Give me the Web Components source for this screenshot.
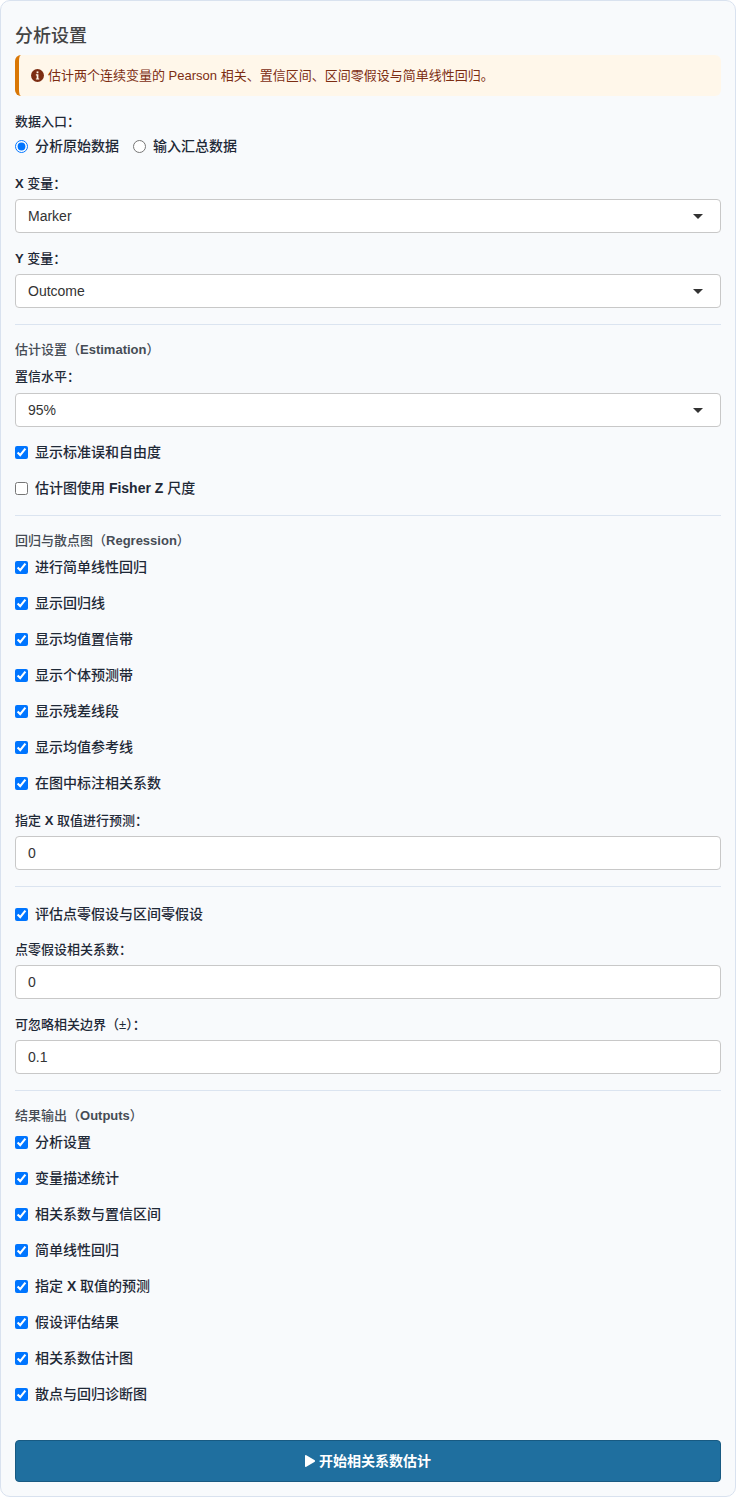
<!DOCTYPE html>
<html lang="zh">
<head>
<meta charset="utf-8">
<title>分析设置</title>
<style>
  html, body { margin: 0; background: #fff; }
  body { font-family: "Liberation Sans", "Noto Sans CJK SC", sans-serif; font-size: 14px; color: #1f2937; }
  b { font-weight: 700; }
</style>
</head>
<body>
<settings-card heading="分析设置">
  <info-note>估计两个连续变量的 Pearson 相关、置信区间、区间零假设与简单线性回归。</info-note>

  <radio-field label="数据入口：" name="entry" options="分析原始数据|输入汇总数据"></radio-field>
  <select-field label="<b>X</b> 变量：" value="Marker"></select-field>
  <select-field label="<b>Y</b> 变量：" value="Outcome"></select-field>

  <section-rule></section-rule>
  <section-head>估计设置（<b>Estimation</b>）</section-head>
  <select-field style="--label-gap:6px" label="置信水平：" value="95%"></select-field>
  <check-row checked>显示标准误和自由度</check-row>
  <check-row>估计图使用 <b>Fisher Z</b> 尺度</check-row>

  <section-rule style="margin-top:17px"></section-rule>
  <section-head>回归与散点图（<b>Regression</b>）</section-head>
  <check-row checked>进行简单线性回归</check-row>
  <check-row checked>显示回归线</check-row>
  <check-row checked>显示均值置信带</check-row>
  <check-row checked>显示个体预测带</check-row>
  <check-row checked>显示残差线段</check-row>
  <check-row checked>显示均值参考线</check-row>
  <check-row checked style="margin-bottom:17px">在图中标注相关系数</check-row>
  <text-field label="指定 <b>X</b> 取值进行预测：" value="0"></text-field>

  <section-rule></section-rule>
  <check-row checked style="margin-top:17px;margin-bottom:15px">评估点零假设与区间零假设</check-row>
  <text-field label="点零假设相关系数：" value="0"></text-field>
  <text-field label="可忽略相关边界（±）：" value="0.1"></text-field>

  <section-rule></section-rule>
  <section-head>结果输出（<b>Outputs</b>）</section-head>
  <check-row checked>分析设置</check-row>
  <check-row checked>变量描述统计</check-row>
  <check-row checked>相关系数与置信区间</check-row>
  <check-row checked>简单线性回归</check-row>
  <check-row checked>指定 <b>X</b> 取值的预测</check-row>
  <check-row checked>假设评估结果</check-row>
  <check-row checked>相关系数估计图</check-row>
  <check-row checked>散点与回归诊断图</check-row>

  <run-button>开始相关系数估计</run-button>
</settings-card>

<script>
const FONT = '"Liberation Sans", "Noto Sans CJK SC", sans-serif';
const BOLD = 'b { font-weight: 700; }';

class SettingsCard extends HTMLElement {
  connectedCallback() {
    this.attachShadow({ mode: 'open' });
    this.shadowRoot.innerHTML = `
      <style>
        :host {
          display: block;
          box-sizing: border-box;
          width: 736px;
          height: 1497px;
          padding: 20px 14px 14px;
          background: #f8fafc;
          border: 1px solid #d9e2ef;
          border-radius: 10px;
        }
        h2 {
          margin: 0 0 4px;
          font: 500 18px/30px ${FONT};
          color: #444;
        }
      </style>
      <h2>${this.getAttribute('heading')}</h2>
      <slot></slot>
    `;
  }
}

class InfoNote extends HTMLElement {
  connectedCallback() {
    this.attachShadow({ mode: 'open' });
    this.shadowRoot.innerHTML = `
      <style>
        :host {
          display: flex;
          align-items: center;
          gap: 4px;
          box-sizing: border-box;
          height: 41px;
          margin-bottom: 15px;
          padding-left: 12px;
          background: #fff7ea;
          border-left: 4px solid #d97706;
          border-radius: 6px;
          font: 13px/18px ${FONT};
          color: #7c2d12;
        }
        svg { width: 13px; height: 13px; flex: none; }
      </style>
      <svg viewBox="0 0 16 16" aria-hidden="true">
        <circle cx="8" cy="8" r="8" fill="currentColor"/>
        <rect x="6.9" y="3" width="2.2" height="2.2" fill="#fff7ea"/>
        <path d="M6 6.6h3.1v5h1v1.3H6v-1.3h1v-3.7H6z" fill="#fff7ea"/>
      </svg>
      <span><slot></slot></span>
    `;
  }
}

const labelCss = `
  ${BOLD}
  .lbl {
    display: block;
    margin-bottom: var(--label-gap, 4px);
    font: 500 13px/22px ${FONT};
    color: #1f2937;
  }
`;

const controlCss = `
  .ctl {
    display: flex;
    align-items: center;
    justify-content: space-between;
    box-sizing: border-box;
    width: 100%;
    height: 34px;
    padding: 0 12px;
    background: #fff;
    border: 1px solid #c8c8c8;
    border-radius: 4px;
    font: 14px/20px ${FONT};
    color: #333;
  }
`;

class RadioField extends HTMLElement {
  connectedCallback() {
    this.attachShadow({ mode: 'open' });
    const name = this.getAttribute('name');
    const opts = this.getAttribute('options').split('|');
    this.shadowRoot.innerHTML = `
      <style>
        :host { display: block; margin-bottom: 17px; }
        ${labelCss}
        .lbl { margin-bottom: 3px; }
        .opts { display: flex; gap: 14px; }
        label { display: flex; align-items: center; gap: 7px; font: 500 14px/20px ${FONT}; color: #1f2937; }
        input { margin: 0; width: 13px; height: 13px; }
      </style>
      <span class="lbl">${this.getAttribute('label')}</span>
      <div class="opts">
        ${opts.map((o, i) => `<label><input type="radio" name="${name}" ${i === 0 ? 'checked' : ''}>${o}</label>`).join('')}
      </div>
    `;
  }
}

class SelectField extends HTMLElement {
  connectedCallback() {
    this.attachShadow({ mode: 'open' });
    this.shadowRoot.innerHTML = `
      <style>
        :host { display: block; margin-bottom: 15px; }
        ${labelCss}
        ${controlCss}
        .lbl { line-height: 21px; margin-bottom: var(--label-gap, 5px); }
        .arrow {
          width: 0;
          height: 0;
          margin-right: 5px;
          border-style: solid;
          border-color: #333 transparent transparent;
          border-width: 5px 5px 0;
        }
      </style>
      <span class="lbl">${this.getAttribute('label')}</span>
      <div class="ctl" role="combobox"><span>${this.getAttribute('value')}</span><i class="arrow"></i></div>
    `;
  }
}

class TextField extends HTMLElement {
  connectedCallback() {
    this.attachShadow({ mode: 'open' });
    this.shadowRoot.innerHTML = `
      <style>
        :host { display: block; margin-bottom: 15px; }
        ${labelCss}
        ${controlCss}
      </style>
      <span class="lbl">${this.getAttribute('label')}</span>
      <div class="ctl"><span>${this.getAttribute('value')}</span></div>
    `;
  }
}

class CheckRow extends HTMLElement {
  connectedCallback() {
    this.attachShadow({ mode: 'open' });
    this.shadowRoot.innerHTML = `
      <style>
        :host { display: block; margin-bottom: 16px; }
        label { display: flex; align-items: center; gap: 7px; font: 500 14px/20px ${FONT}; color: #1f2937; }
        input { margin: 0; width: 13px; height: 13px; flex: none; }
      </style>
      <label><input type="checkbox" ${this.hasAttribute('checked') ? 'checked' : ''}><span><slot></slot></span></label>
    `;
  }
}

class SectionRule extends HTMLElement {
  connectedCallback() {
    this.attachShadow({ mode: 'open' });
    this.shadowRoot.innerHTML = `
      <style>
        :host { display: block; height: 1px; margin: 16px 0 14px; background: #dbe4f0; }
      </style>
    `;
  }
}

class SectionHead extends HTMLElement {
  connectedCallback() {
    this.attachShadow({ mode: 'open' });
    this.shadowRoot.innerHTML = `
      <style>
        :host { display: block; margin-bottom: 5px; font: 500 13px/22px ${FONT}; color: #464c55; }
      </style>
      <slot></slot>
    `;
  }
}

class RunButton extends HTMLElement {
  connectedCallback() {
    this.attachShadow({ mode: 'open' });
    this.shadowRoot.innerHTML = `
      <style>
        :host { display: block; margin-top: 36px; }
        button {
          display: flex;
          align-items: center;
          justify-content: center;
          gap: 4px;
          box-sizing: border-box;
          width: 100%;
          height: 42px;
          padding: 0;
          background: #1f6f9f;
          border: 1px solid #185a82;
          border-radius: 4px;
          font: 600 14px/20px ${FONT};
          color: #fff;
        }
        svg { width: 10px; height: 12px; }
      </style>
      <button type="button">
        <svg viewBox="0 0 10 12" aria-hidden="true"><path d="M1.3.2 9.4 5a1.1 1.1 0 0 1 0 2L1.3 11.8A.9.9 0 0 1 0 11V1A.9.9 0 0 1 1.3.2z" fill="#fff"/></svg>
        <span><slot></slot></span>
      </button>
    `;
  }
}

customElements.define('settings-card', SettingsCard);
customElements.define('info-note', InfoNote);
customElements.define('radio-field', RadioField);
customElements.define('select-field', SelectField);
customElements.define('text-field', TextField);
customElements.define('check-row', CheckRow);
customElements.define('section-rule', SectionRule);
customElements.define('section-head', SectionHead);
customElements.define('run-button', RunButton);
</script>
</body>
</html>
